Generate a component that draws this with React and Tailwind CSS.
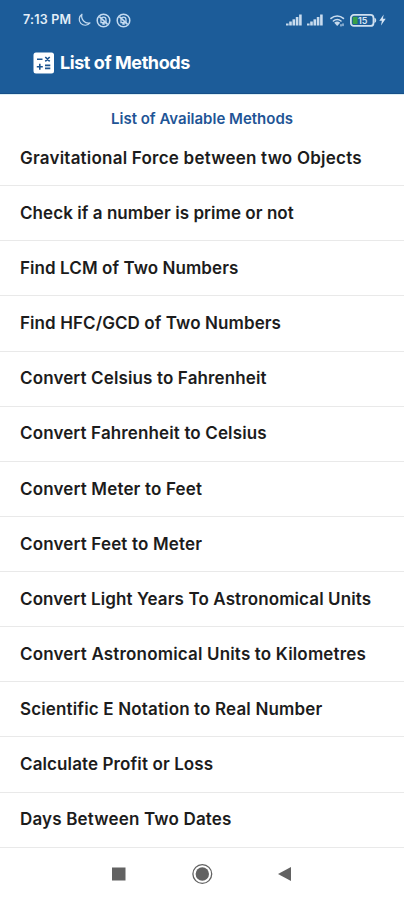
import React from 'react';

const METHODS = [
  { title: 'Gravitational Force between two Objects', tracking: 'tracking-[0.22px]' },
  { title: 'Check if a number is prime or not', tracking: 'tracking-[0.06px]' },
  { title: 'Find LCM of Two Numbers', tracking: 'tracking-[0.07px]' },
  { title: 'Find HFC/GCD of Two Numbers', tracking: 'tracking-[0.09px]' },
  { title: 'Convert Celsius to Fahrenheit', tracking: 'tracking-[0.13px]' },
  { title: 'Convert Fahrenheit to Celsius', tracking: 'tracking-[0.13px]' },
  { title: 'Convert Meter to Feet', tracking: 'tracking-[0.16px]' },
  { title: 'Convert Feet to Meter', tracking: 'tracking-[0.16px]' },
  { title: 'Convert Light Years To Astronomical Units', tracking: 'tracking-[0.11px]' },
  { title: 'Convert Astronomical Units to Kilometres', tracking: 'tracking-[0.17px]' },
  { title: 'Scientific E Notation to Real Number', tracking: 'tracking-[0.15px]' },
  { title: 'Calculate Profit or Loss', tracking: 'tracking-[0.11px]' },
  { title: 'Days Between Two Dates', tracking: 'tracking-[0.17px]' },
];

function MoonIcon() {
  return (
    <svg width="14" height="14" viewBox="0 0 14 14" fill="none" stroke="#c3daf0" strokeWidth="1.2" strokeLinejoin="round">
      <path d="M5 1.2A6 6 0 1 0 13 9.9C10.6 10.4 8.2 9.7 6.6 8C4.9 6.2 4.3 3.5 5 1.2Z" />
    </svg>
  );
}

function MutedIcon() {
  return (
    <svg width="15" height="15" viewBox="0 0 15 15" fill="none" stroke="#c3daf0">
      <circle cx="7.5" cy="7.5" r="6.3" strokeWidth="1.5" />
      <path d="M5 9.7V6.6a2.5 2.5 0 0 1 5 0v3.1ZM6.3 11h2.4" strokeWidth="1.3" />
      <path d="M3.4 3.6l8.2 7.8" strokeWidth="1.6" />
    </svg>
  );
}

function SignalIcon() {
  return (
    <svg width="16" height="12" viewBox="0 0 16 12" fill="#c8dbee">
      <rect x="0" y="9.5" width="2.6" height="2" />
      <rect x="3.2" y="7.5" width="2.6" height="4" />
      <rect x="6.5" y="5.3" width="2.6" height="6.2" />
      <rect x="9.8" y="3" width="2.6" height="8.5" />
      <rect x="13.1" y="0.5" width="2.6" height="11" />
    </svg>
  );
}

function WifiIcon() {
  return (
    <svg width="15" height="13" viewBox="0 0 15 13" fill="none" stroke="#c8dbee" strokeLinecap="round">
      <path d="M1 4.4a9.2 9.2 0 0 1 12.4 0" strokeWidth="1.6" />
      <path d="M3.4 7a5.8 5.8 0 0 1 7.6 0" strokeWidth="1.6" />
      <path d="M4.2 8.8a4.4 4.4 0 0 1 6 0L7.2 12Z" fill="#c8dbee" stroke="none" />
      <path d="M11 10.6v1.4M13 9.8v1.8" strokeWidth="1.2" />
    </svg>
  );
}

function BatteryIcon() {
  return (
    <svg width="27" height="13" viewBox="0 0 27 13">
      <rect x="0.9" y="0.9" width="22.6" height="11" rx="3" fill="#1c5c99" stroke="#cfe0f0" strokeWidth="1.8" />
      <path d="M24.4 3.8c2.4.6 2.4 4.6 0 5.2Z" fill="#cfe0f0" />
      <rect x="2.8" y="2.8" width="4.7" height="7.2" fill="#38a047" />
      <text x="12.8" y="9.6" textAnchor="middle" fill="#d7e6f3" fontSize="9" fontWeight="600" fontFamily="Inter, sans-serif">15</text>
    </svg>
  );
}

function BoltIcon() {
  return (
    <svg width="7" height="12" viewBox="0 0 7 12" fill="#d5e5f5">
      <path d="M4.7.5L.3 6.8h2.6L2 11.5l4.7-6.7H3.9Z" />
    </svg>
  );
}

function CalculateIcon() {
  return (
    <svg width="22" height="22" viewBox="0 0 22 22">
      <rect x="0.5" y="0.5" width="20.5" height="21" rx="2.5" fill="#fff" />
      <g stroke="#1c5490" strokeWidth="1.6">
        <path d="M4 7.2h5.5M12.3 5l4.4 4.4M16.7 5l-4.4 4.4" />
        <path d="M3.8 14.8h6M6.8 11.8v6M12 13.4h5.3M12 16.4h5.3" />
      </g>
    </svg>
  );
}

export default function App() {
  return (
    <div className="flex h-[900px] w-[404px] flex-col overflow-hidden bg-white font-['Inter',sans-serif]">
      {/* Status bar and title */}
      <header className="h-[94px] shrink-0 border-b border-[#164f88] bg-[#1c5c99] text-white">
        <div className="flex h-10 items-center justify-between pl-[23px] pr-[18px]">
          <div className="flex items-center">
            <span className="w-[54px] whitespace-nowrap text-[12.5px] font-semibold tracking-[0.2px] text-[#e3eef8]">7:13 PM</span>
            <MoonIcon />
            <span className="ml-[5px]"><MutedIcon /></span>
            <span className="ml-[5px]"><MutedIcon /></span>
          </div>
          <div className="flex items-center">
            <SignalIcon />
            <span className="ml-[5px]"><SignalIcon /></span>
            <span className="ml-[7px]"><WifiIcon /></span>
            <span className="ml-[5px]"><BatteryIcon /></span>
            <span className="ml-0.5"><BoltIcon /></span>
          </div>
        </div>
        <div className="flex h-[46px] items-center pl-[33px]">
          <CalculateIcon />
          <h1 className="ml-[5px] whitespace-nowrap pb-px text-[18px] font-bold tracking-[-0.43px]">List of Methods</h1>
        </div>
      </header>

      {/* Method list */}
      <main className="h-[753.5px] shrink-0 border-t border-[#dceef4]">
        <h2 className="flex h-[36px] justify-center pt-[14px] text-[15px] font-semibold leading-5 text-[#1f5596]">
          List of Available Methods
        </h2>
        <ul>
          {METHODS.map(({ title, tracking }) => (
            <li
              key={title}
              className={`flex h-[55.13px] items-center whitespace-nowrap border-b border-[#e9e9e9] pl-5 pt-px text-[17px] font-semibold text-[#1c1c1c] ${tracking}`}
            >
              {title}
            </li>
          ))}
        </ul>
      </main>

      {/* Navigation buttons */}
      <nav className="flex flex-1 items-center justify-center">
        <svg width="404" height="52" viewBox="0 0 404 52" fill="#626262">
          <rect x="112" y="19.5" width="13.5" height="13" />
          <circle cx="202.3" cy="26" r="9.4" fill="none" stroke="#626262" strokeWidth="1.3" />
          <circle cx="202.3" cy="26" r="6.7" />
          <path d="M278 26L291 19v14Z" />
        </svg>
      </nav>
    </div>
  );
}
